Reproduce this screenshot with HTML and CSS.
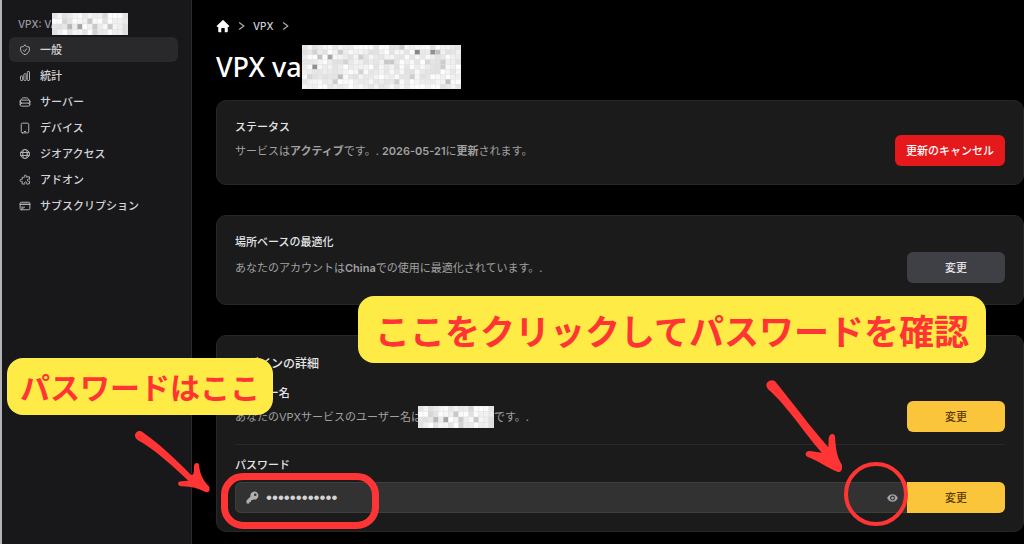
FILE: index.html
```html
<!DOCTYPE html>
<html lang="ja">
  <head>
    <meta charset="UTF-8" />
    <meta name="viewport" content="width=device-width, initial-scale=1.0" />
    <title>VPX</title>
    <link rel="stylesheet" href="styles.css">
  </head>
  <body>
    <div class="page">
      <aside class="sidebar">
        <div class="account">VPX: VA<svg class="mosaic small" data-cols="15" data-rows="4"></svg></div>
        <nav class="menu">
          <a href="#" class="active">
            <svg viewBox="0 0 24 24"><path d="M9 12.75 11.25 15 15 9.75M12 2.7A12 12 0 0 1 3.6 6 12 12 0 0 0 3 9.75c0 5.6 3.8 10.3 9 11.6 5.2-1.3 9-6 9-11.6 0-1.3-.2-2.6-.6-3.75h-.15c-3.2 0-6.1-1.25-8.25-3.3Z" /></svg>
            一般
          </a>
          <a href="#">
            <svg viewBox="0 0 24 24"><path d="M3 13.1c0-.6.5-1.1 1.1-1.1h2.3c.6 0 1.1.5 1.1 1.1v6.8c0 .6-.5 1.1-1.1 1.1H4.1C3.5 21 3 20.5 3 19.9ZM9.75 8.6c0-.6.5-1.1 1.1-1.1h2.3c.6 0 1.1.5 1.1 1.1v11.3c0 .6-.5 1.1-1.1 1.1h-2.3c-.6 0-1.1-.5-1.1-1.1ZM16.5 4.1c0-.6.5-1.1 1.1-1.1h2.3c.6 0 1.1.5 1.1 1.1v15.8c0 .6-.5 1.1-1.1 1.1h-2.3c-.6 0-1.1-.5-1.1-1.1Z" /></svg>
            統計
          </a>
          <a href="#">
            <svg viewBox="0 0 24 24"><path d="M5.25 14.25h13.5a3 3 0 0 0 0-6H5.25a3 3 0 0 0 0 6Zm0 0a3 3 0 0 0 0 6h13.5a3 3 0 0 0 0-6M2.25 11.25c0-1 .3-1.9.9-2.7l2.6-3.45a3.4 3.4 0 0 1 2.7-1.35h7.1c1.1 0 2.1.5 2.7 1.35l2.6 3.45c.6.8.9 1.7.9 2.7M2.25 11.25v6M21.75 11.25v6" /></svg>
            サーバー
          </a>
          <a href="#">
            <svg viewBox="0 0 24 24"><path d="M10.5 19h3M6.75 21.75h10.5a2.25 2.25 0 0 0 2.25-2.25v-15a2.25 2.25 0 0 0-2.25-2.25H6.75A2.25 2.25 0 0 0 4.5 4.5v15a2.25 2.25 0 0 0 2.25 2.25Z" /></svg>
            デバイス
          </a>
          <a href="#">
            <svg viewBox="0 0 24 24"><circle cx="12" cy="12" r="9" /><ellipse cx="12" cy="12" rx="4.5" ry="9" /><path d="M3.5 9h17M3.5 15h17" /></svg>
            ジオアクセス
          </a>
          <a href="#">
            <svg viewBox="0 0 24 24"><path d="M14.25 6.1c0-.35.2-.65.4-.95.2-.3.35-.65.35-1 0-1-1-1.9-2.25-1.9s-2.25.85-2.25 1.9c0 .35.15.7.35 1 .2.3.4.6.4.95 0 .4-.3.7-.7.7a48 48 0 0 1-4.2-.3c.2 1.4.3 2.7.3 4.2 0 .4-.3.65-.65.65-.35 0-.65-.2-.95-.4-.3-.2-.65-.35-1-.35-1 0-1.9 1-1.9 2.25s.85 2.25 1.9 2.25c.35 0 .7-.15 1-.35.3-.2.6-.4.95-.4.3 0 .55.25.55.55-.1 1.7-.25 3.3-.5 4.9 1.7.2 3.4.35 5.1.4.35 0 .6-.3.6-.6 0-.35-.2-.65-.4-.95-.2-.3-.35-.65-.35-1 0-1 1-1.9 2.25-1.9s2.25.85 2.25 1.9c0 .35-.15.7-.35 1-.2.3-.4.6-.4.95 0 .35.25.6.6.6 1.8-.1 3.6-.3 5.3-.65.3-1.7.5-3.4.6-5.1a.6.6 0 0 0-.6-.6c-.35 0-.65.2-.95.4-.3.2-.65.35-1 .35-1 0-1.9-1-1.9-2.25s.85-2.25 1.9-2.25c.35 0 .7.15 1 .35.3.2.6.4.95.4.35 0 .65-.3.6-.65-.05-1.6-.2-3.1-.45-4.7-1.3.2-2.7.4-4.05.45-.35 0-.6-.25-.6-.6Z" /></svg>
            アドオン
          </a>
          <a href="#">
            <svg viewBox="0 0 24 24"><path d="M2.25 8.25h19.5M2.25 9h19.5M5.25 14.25h6M5.25 16.5h3M4.5 19.5h15a2.25 2.25 0 0 0 2.25-2.25V6.75A2.25 2.25 0 0 0 19.5 4.5h-15a2.25 2.25 0 0 0-2.25 2.25v10.5a2.25 2.25 0 0 0 2.25 2.25Z" /></svg>
            サブスクリプション
          </a>
        </nav>
      </aside>

      <main class="content">
        <nav class="breadcrumb">
          <a href="#" aria-label="ホーム"><svg class="home" viewBox="0 0 20 20"><path d="M9.3 1.8a1 1 0 0 1 1.4 0l8 8A1 1 0 0 1 18 11.5h-1.2V18a1 1 0 0 1-1 1h-3.3v-5a1 1 0 0 0-1-1h-3a1 1 0 0 0-1 1v5H4.2a1 1 0 0 1-1-1v-6.5H2a1 1 0 0 1-.7-1.7Z" /></svg></a>
          <svg class="chevron" viewBox="0 0 6 8"><path d="M1 1 5 4 1 7" /></svg>
          <a href="#">VPX</a>
          <svg class="chevron" viewBox="0 0 6 8"><path d="M1 1 5 4 1 7" /></svg>
        </nav>
        <h1>VPX va<svg class="mosaic large" data-cols="31" data-rows="9"></svg></h1>

        <section class="card">
          <h3>ステータス</h3>
          <div class="row">
            <p>サービスは<b>アクティブ</b>です。. <b>2026-05-21</b>に<b>更新</b>されます。</p>
            <button class="btn danger">更新のキャンセル</button>
          </div>
        </section>

        <section class="card spaced">
          <h3>場所ベースの最適化</h3>
          <div class="row">
            <p>あなたのアカウントは<b>China</b>での使用に最適化されています。.</p>
            <button class="btn gray">変更</button>
          </div>
        </section>

        <section class="card">
          <h2>ログインの詳細</h2>
          <h3>ユーザー名</h3>
          <div class="row">
            <p class="username">あなたのVPXサービスのユーザー名は<svg class="mosaic small" data-cols="15" data-rows="4"></svg>です。.</p>
            <button class="btn yellow">変更</button>
          </div>
          <hr />
          <label for="password">パスワード</label>
          <div class="password">
            <svg class="key" viewBox="0 0 20 20"><path fill-rule="evenodd" d="M13 .8a6.2 6.2 0 0 0-6 7.8L.8 14.8v4.4h4.4v-2.4h2.4v-2.4h1.6l2.2-1.4A6.2 6.2 0 1 0 13 .8Zm1.2 3a2 2 0 1 1 0 4 2 2 0 0 1 0-4Z" /></svg>
            <input type="password" id="password" value="passwordpass" />
            <button class="eye" aria-label="表示"><svg viewBox="0 0 20 14"><path fill-rule="evenodd" d="M10 0c4.5 0 8.2 2.8 9.7 7-1.5 4.2-5.2 7-9.7 7S1.8 11.2.3 7C1.8 2.8 5.5 0 10 0Zm0 2.5a4.5 4.5 0 1 0 0 9 4.5 4.5 0 0 0 0-9Z" /><circle cx="10" cy="7" r="2.5" /></svg></button>
            <button class="btn yellow joined">変更</button>
          </div>
        </section>
      </main>

      <!-- notes drawn over the screen -->
      <div class="note note-left">パスワードはここ</div>
      <div class="note note-right">ここをクリックしてパスワードを確認</div>
      <svg class="arrow arrow-left" viewBox="0 0 330 240"><path d="M45 47C45 35 60 28 70 38 115 68 175 125 213 165 222 165 222 155 222 137 224 127 235 127 237 135 240 165 250 182 268 200Q272 218 258 217C235 205 210 198 183 199 170 196 172 184 184 184L205 182C160 140 100 85 54 61Q45 55 45 47Z" /></svg>
      <svg class="arrow arrow-right" viewBox="189 48 252 300"><path d="M200 80C195 68 212 55 225 64 275 125 330 200 385 262L386 235C388 220 402 218 405 228 407 265 410 290 426 315 427 330 424 337 414 336 385 325 350 300 322 290 312 284 318 272 330 273L365 278C310 215 255 130 204 88Z" /></svg>
      <div class="ring ring-box"></div>
      <div class="ring ring-circle"></div>
    </div>

    <script>
      // darker cells as [col, row, gray]
      const darkCells = {
        15: [[3, 2, 185], [5, 2, 165], [8, 2, 200], [8, 3, 210], [7, 1, 200], [11, 2, 200], [2, 1, 215], [10, 0, 215]],
        31: [[2, 4, 145], [5, 2, 165], [3, 2, 195], [22, 1, 135], [25, 1, 145], [26, 1, 190], [27, 3, 205], [27, 4, 205], [16, 3, 200], [17, 3, 200], [7, 6, 190], [6, 7, 205], [11, 2, 205], [19, 0, 205], [11, 5, 210], [21, 6, 205], [28, 7, 190], [7, 1, 205], [8, 3, 210], [18, 7, 205], [2, 1, 210], [24, 3, 215], [1, 6, 215]]
      };

      function drawMosaic(svg) {
        const cols = Number(svg.dataset.cols);
        const rows = Number(svg.dataset.rows);
        svg.setAttribute("viewBox", `0 0 ${cols} ${rows}`);
        svg.setAttribute("preserveAspectRatio", "none");
        let seed = 7;
        for (let y = 0; y < rows; y++) {
          for (let x = 0; x < cols; x++) {
            seed = (seed * 16807) % 2147483647;
            const dark = darkCells[cols].find((c) => c[0] === x && c[1] === y);
            const gray = dark ? dark[2] : 224 + (seed % 31);
            const rect = document.createElementNS("http://www.w3.org/2000/svg", "rect");
            rect.setAttribute("x", x);
            rect.setAttribute("y", y);
            rect.setAttribute("width", 1);
            rect.setAttribute("height", 1);
            rect.setAttribute("fill", `rgb(${gray}, ${gray}, ${gray})`);
            svg.appendChild(rect);
          }
        }
      }

      document.querySelectorAll(".mosaic").forEach(drawMosaic);
    </script>
  </body>
</html>
```
FILE: styles.css
```css
* {
  box-sizing: border-box;
  margin: 0;
  padding: 0;
}
body {
  background: #000;
  color: #d4d4d8;
  font-family: Inter, "Noto Sans CJK JP", sans-serif;
  font-size: 11px;
  line-height: 16px;
}
a {
  color: inherit;
  text-decoration: none;
}
button,
input {
  font: inherit;
  border: 0;
}
.page {
  position: relative;
  display: flex;
  min-height: 100vh;
  overflow: hidden;
}

/* sidebar */
.sidebar {
  flex: 0 0 192px;
  padding: 13px 13px 0 7px;
  background: #18181a;
  border-left: 2px solid #b4b4b8;
  border-right: 1px solid #2b2b2e;
}
.account {
  display: flex;
  align-items: center;
  height: 22px;
  margin-bottom: 2px;
  padding-left: 9px;
  color: #9b9ba3;
  font-size: 10px;
  font-weight: 500;
}
.mosaic {
  flex: none;
  background: #ececec;
  stroke: #dcdcdc;
  stroke-width: 0.05;
}
.mosaic.small {
  width: 76px;
  height: 22px;
}
.mosaic.large {
  width: 159px;
  height: 44px;
}
.account .mosaic {
  margin-left: -6px;
}
.username .mosaic {
  margin-left: -4px;
}
.menu {
  display: grid;
  gap: 1px;
}
.menu a {
  display: flex;
  align-items: center;
  gap: 9px;
  height: 25px;
  padding-left: 10px;
  border-radius: 6px;
  font-weight: 500;
}
.menu a.active {
  background: #29292b;
}
.menu svg {
  width: 12px;
  height: 12px;
  fill: none;
  stroke: #b0b0b5;
  stroke-width: 2;
  stroke-linecap: round;
  stroke-linejoin: round;
}

/* main column */
.content {
  flex: 1;
  min-width: 0;
  padding: 18px 0 12px 24px;
}
.breadcrumb {
  display: flex;
  align-items: center;
  gap: 8px;
  height: 16px;
  font-weight: 500;
  font-size: 10px;
}
.breadcrumb a {
  display: flex;
}
.home {
  width: 14px;
  height: 14px;
  fill: #fff;
}
.chevron {
  width: 7px;
  height: 10px;
  fill: none;
  stroke: #b0b0b5;
}
h1 {
  display: flex;
  align-items: center;
  height: 44px;
  margin: 11px 0;
  color: #fff;
  font-family: "Noto Sans", "Noto Sans CJK JP", sans-serif;
  font-size: 27px;
  font-weight: 500;
}
.card {
  margin-bottom: 30px;
  padding: 18px;
  background: #1b1b1b;
  border: 1px solid #272727;
  border-radius: 10px;
}
.card:last-child {
  margin-bottom: 0;
}
.card h2 {
  margin-bottom: 11px;
  color: #e4e4e7;
  font-size: 12px;
  font-weight: 500;
  line-height: 20px;
}
.card h3,
.card label {
  display: block;
  color: #e4e4e7;
  font-size: 11px;
  font-weight: 500;
}
.card.spaced {
  padding-bottom: 21px;
}
.card.spaced h3 {
  margin-bottom: 2px;
}
.row {
  display: flex;
  align-items: center;
  justify-content: space-between;
}
.row p {
  color: #a1a1a1;
}
.row b {
  font-weight: 600;
}
.username {
  display: flex;
  align-items: center;
}
.btn {
  min-width: 98px;
  height: 31px;
  padding: 0 11px;
  border-radius: 6px;
  font-weight: 500;
}
.danger {
  background: #e5191b;
  color: #fff;
}
.gray {
  background: #3f3f46;
  color: #e4e4e7;
}
.yellow {
  background: #fbc53b;
  color: #5c3c0c;
}
hr {
  margin: 12px 0;
  border: 0;
  border-top: 1px solid #292929;
}
.password {
  display: flex;
  align-items: center;
  height: 31px;
  margin-top: 9px;
  background: #323232;
  border-radius: 6px;
  box-shadow: inset 0 0 0 1px #3e3e3e;
}
.key {
  width: 13px;
  height: 13px;
  margin: 0 7px 0 11px;
  fill: #b0b0b0;
}
.password input {
  flex: 1;
  min-width: 0;
  background: none;
  color: #d4d4d4;
  font-family: "Liberation Sans", sans-serif;
  font-size: 17px;
  outline: 0;
}
.eye {
  display: flex;
  padding: 9px;
  background: none;
}
.eye svg {
  width: 11px;
  height: 8px;
  fill: #a1a1aa;
}
.joined {
  border-radius: 0 6px 6px 0;
}

/* notes and pointers over the page */
.note,
.arrow,
.ring {
  position: absolute;
}
.note {
  background: #ffeb45;
  color: #ff3535;
  font-family: "Noto Sans CJK JP", sans-serif;
  font-weight: 700;
  border-radius: 16px;
  white-space: nowrap;
}
.note-left {
  left: 7px;
  top: 358px;
  padding: 0 13px;
  font-size: 30px;
  line-height: 57px;
}
.note-right {
  right: 38px;
  top: 296px;
  padding: 0 17px;
  font-size: 35px;
  line-height: 67px;
}
.arrow {
  fill: #ff3535;
}
.arrow-left {
  left: 120px;
  top: 420px;
  width: 110px;
}
.arrow-right {
  right: 177px;
  top: 376px;
  width: 84px;
}
.ring {
  border: 7px solid #ff3535;
}
.ring-box {
  left: 221px;
  top: 473px;
  width: 158px;
  height: 56px;
  border-radius: 22px;
}
.ring-circle {
  right: 116px;
  top: 462px;
  width: 64px;
  height: 64px;
  border-width: 4px;
  border-radius: 50%;
}
```
